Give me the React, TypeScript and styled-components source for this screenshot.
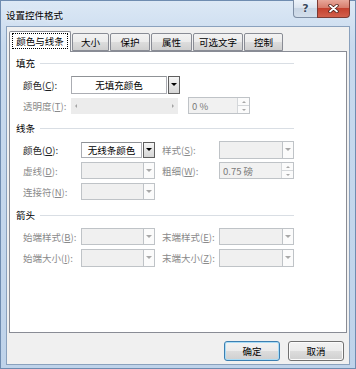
import React from "react";
import styled, { createGlobalStyle } from "styled-components";

const GlobalStyle = createGlobalStyle`
  html, body { margin: 0; padding: 0; background: #c6d8ec; }
  body {
    font-family: "Noto Sans CJK SC", "Noto Sans", sans-serif;
    font-size: 9.5px;
    color: #1e1e1e;
  }
  * { box-sizing: border-box; }
`;

// window frame
const Window = styled.div`
  width: 356px;
  height: 369px;
  border: 1px solid #6f8cb0;
  background: linear-gradient(180deg, #dce8f5 0%, #c8daee 12%, #bfd3ea 100%);
  display: flex;
  flex-direction: column;
  padding: 0 5px 3px 5px;
`;
const TitleBar = styled.div`
  height: 25px;
  display: flex;
  align-items: flex-start;
`;
const Title = styled.div`
  margin-top: 8px;
  line-height: 12px;
  color: #000;
  text-shadow: 0 0 4px rgba(255, 255, 255, 0.9);
`;
const Spacer = styled.div`
  flex: 1;
`;
const CaptionButton = styled.div<{ $w: number; $close?: boolean }>`
  width: ${(p) => p.$w}px;
  height: 18px;
  margin-top: -1px;
  display: flex;
  align-items: center;
  justify-content: center;
  border: 1px solid ${(p) => (p.$close ? "#7c3a33" : "#7d8da3")};
  border-top: none;
  border-radius: ${(p) => (p.$close ? "0 0 4px 0" : "0 0 0 4px")};
  margin-left: ${(p) => (p.$close ? "-1px" : "0")};
  background: ${(p) =>
    p.$close
      ? "linear-gradient(180deg, #e8a79a 0%, #d77d6d 45%, #c4412f 50%, #d2604c 100%)"
      : "linear-gradient(180deg, #eef3f9 0%, #dbe4ef 45%, #c8d5e4 50%, #d3deeb 100%)"};
  color: #3a4a5e;
  font-family: "DejaVu Sans", sans-serif;
  font-size: 11px;
  font-weight: bold;
  text-shadow: 0 0 2px #fff;
`;

// client area
const Client = styled.div`
  flex: 1;
  border: 1px solid #8aa1bd;
  background: #f0f0f0;
  display: flex;
  flex-direction: column;
  padding: 4px 2px 0 2px;
`;
const TabStrip = styled.div`
  height: 20px;
  display: flex;
  align-items: flex-end;
  position: relative;
  z-index: 1;
`;
const Tab = styled.div<{ $w: number; $active?: boolean }>`
  width: ${(p) => p.$w}px;
  height: ${(p) => (p.$active ? 21 : 18)}px;
  margin-bottom: ${(p) => (p.$active ? -1 : 0)}px;
  margin-right: 1px;
  border: 1px solid #898c95;
  border-bottom: ${(p) => (p.$active ? "none" : "1px solid #898c95")};
  border-radius: 2px 2px 0 0;
  background: ${(p) =>
    p.$active
      ? "#ffffff"
      : "linear-gradient(180deg, #f3f3f3 0%, #ebebeb 50%, #dddddd 50%, #cfcfcf 100%)"};
  display: flex;
  align-items: center;
  justify-content: center;
  padding-bottom: ${(p) => (p.$active ? 2 : 0)}px;
  color: #000;
`;
const FocusText = styled.span`
  outline: 1px dotted #000;
  outline-offset: 1px;
  padding: 0 2px;
  line-height: 12px;
`;
const Panel = styled.div`
  height: 282px;
  border: 1px solid #898c95;
  background: #fff;
  padding: 3px 0 0 6px;
  display: flex;
  flex-direction: column;
`;

// sections
const Header = styled.div<{ $top: number }>`
  width: 278px;
  height: 16px;
  margin-top: ${(p) => p.$top}px;
  margin-bottom: 3px;
  display: flex;
  align-items: center;
  color: #000;
`;
const HeaderLine = styled.div`
  flex: 1;
  height: 1px;
  margin-left: 5px;
  background: #d9dee4;
`;
const Row = styled.div`
  height: 21px;
  padding-left: 7px;
  display: flex;
  align-items: center;
`;
const Label = styled.div<{ $w: number; $off?: boolean; $gap?: number }>`
  width: ${(p) => p.$w}px;
  margin-left: ${(p) => p.$gap || 0}px;
  color: ${(p) => (p.$off ? "#8a8a8a" : "#1e1e1e")};
  white-space: nowrap;
  u { text-decoration-thickness: 1px; text-underline-offset: 1px; }
`;

// controls
const ComboBox = styled.div<{ $w: number; $h: number }>`
  width: ${(p) => p.$w}px;
  height: ${(p) => p.$h}px;
  display: flex;
`;
const ComboField = styled.div<{ $off?: boolean }>`
  flex: 1;
  border: 1px solid ${(p) => (p.$off ? "#bfc3c7" : "#abadb3")};
  border-top-color: ${(p) => (p.$off ? "#bfc3c7" : "#8f9296")};
  background: ${(p) => (p.$off ? "#f0f0f0" : "#fff")};
  display: flex;
  align-items: center;
  justify-content: center;
  color: #000;
`;
const ComboButton = styled.div<{ $off?: boolean }>`
  width: 12px;
  margin-left: ${(p) => (p.$off ? -1 : 1)}px;
  border: 1px solid ${(p) => (p.$off ? "#bfc3c7" : "#5f5f5f")};
  background: ${(p) =>
    p.$off ? "#fbfbfb" : "linear-gradient(180deg, #f6f6f6 0%, #e4e4e4 50%, #d6d6d6 100%)"};
  display: flex;
  align-items: center;
  justify-content: center;
`;
const Arrow = styled.div<{ $dir: "up" | "down" | "left" | "right"; $color: string; $s?: number }>`
  width: 0;
  height: 0;
  ${(p) => {
    const s = p.$s || 3;
    const t = "transparent";
    if (p.$dir === "down")
      return `border-left:${s}px solid ${t};border-right:${s}px solid ${t};border-top:${s}px solid ${p.$color};`;
    if (p.$dir === "up")
      return `border-left:${s}px solid ${t};border-right:${s}px solid ${t};border-bottom:${s}px solid ${p.$color};`;
    if (p.$dir === "left")
      return `border-top:${s}px solid ${t};border-bottom:${s}px solid ${t};border-right:${s}px solid ${p.$color};`;
    return `border-top:${s}px solid ${t};border-bottom:${s}px solid ${t};border-left:${s}px solid ${p.$color};`;
  }}
`;
const Slider = styled.div`
  width: 107px;
  height: 16px;
  background: #ececec;
  display: flex;
  align-items: center;
  justify-content: space-between;
  padding: 0 4px;
`;
const SpinBox = styled.div<{ $w: number; $gap?: number }>`
  width: ${(p) => p.$w}px;
  height: 17px;
  margin-left: ${(p) => p.$gap || 0}px;
  border: 1px solid #bfc3c7;
  background: #f1f1f1;
  display: flex;
`;
const SpinText = styled.div`
  flex: 1;
  padding-left: 3px;
  display: flex;
  align-items: center;
  color: #7a7a7a;
`;
const SpinButtons = styled.div`
  width: 12px;
  display: flex;
  flex-direction: column;
  border-left: 1px solid #d4d7da;
  background: #fbfbfb;
`;
const SpinHalf = styled.div<{ $first?: boolean }>`
  flex: 1;
  display: flex;
  align-items: center;
  justify-content: center;
  border-bottom: ${(p) => (p.$first ? "1px solid #d4d7da" : "none")};
`;

// footer
const Footer = styled.div`
  display: flex;
  justify-content: flex-end;
  gap: 8px;
  padding: 8px 3px 0 0;
`;
const Button = styled.div<{ $default?: boolean }>`
  width: 56px;
  height: 20px;
  border: 1px solid ${(p) => (p.$default ? "#3c7fb1" : "#707070")};
  border-radius: 3px;
  box-shadow: ${(p) => (p.$default ? "inset 0 0 0 1px #a9dcf6" : "inset 0 0 0 1px #fbfbfb")};
  background: linear-gradient(180deg, #f2f2f2 0%, #ebebeb 50%, #dddddd 50%, #cfcfcf 100%);
  display: flex;
  align-items: center;
  justify-content: center;
  color: #000;
`;

type ComboProps = { w: number; h: number; text?: string; off?: boolean };
const Combo = ({ w, h, text, off }: ComboProps) => (
  <ComboBox $w={w} $h={h}>
    <ComboField $off={off}>{text}</ComboField>
    <ComboButton $off={off}>
      <Arrow $dir="down" $color={off ? "#a8a8a8" : "#000"} $s={off ? 3 : 3} />
    </ComboButton>
  </ComboBox>
);

const Spin = ({ w, text, gap }: { w: number; text: string; gap?: number }) => (
  <SpinBox $w={w} $gap={gap}>
    <SpinText>{text}</SpinText>
    <SpinButtons>
      <SpinHalf $first>
        <Arrow $dir="up" $color="#a8a8a8" $s={2} />
      </SpinHalf>
      <SpinHalf>
        <Arrow $dir="down" $color="#a8a8a8" $s={2} />
      </SpinHalf>
    </SpinButtons>
  </SpinBox>
);

const tabs = [
  { name: "大小", w: 37 },
  { name: "保护", w: 40 },
  { name: "属性", w: 41 },
  { name: "可选文字", w: 50 },
  { name: "控制", w: 39 },
];

const App = () => (
  <>
    <GlobalStyle />
    <Window>
      <TitleBar>
        <Title>设置控件格式</Title>
        <Spacer />
        <CaptionButton $w={25}>?</CaptionButton>
        <CaptionButton $w={33} $close>
          <svg width="11" height="9" viewBox="0 0 11 9">
            <path d="M2 1.5 L9 7.5 M9 1.5 L2 7.5" stroke="#4a1d17" strokeWidth="3.4" strokeLinecap="round" />
            <path d="M2 1.5 L9 7.5 M9 1.5 L2 7.5" stroke="#fff" strokeWidth="1.8" strokeLinecap="round" />
          </svg>
        </CaptionButton>
      </TitleBar>
      <Client>
        <TabStrip>
          <Tab $w={62} $active>
            <FocusText>颜色与线条</FocusText>
          </Tab>
          {tabs.map((t) => (
            <Tab key={t.name} $w={t.w}>
              {t.name}
            </Tab>
          ))}
        </TabStrip>
        <Panel>
          <Header $top={0}>
            填充<HeaderLine />
          </Header>
          <Row>
            <Label $w={48}>
              颜色(<u>C</u>):
            </Label>
            <Combo w={109} h={18} text="无填充颜色" />
          </Row>
          <Row>
            <Label $w={48} $off>
              透明度(<u>T</u>):
            </Label>
            <Slider>
              <Arrow $dir="left" $color="#a3a3a3" $s={2} />
              <Arrow $dir="right" $color="#a3a3a3" $s={2} />
            </Slider>
            <Spin w={62} text="0 %" gap={10} />
          </Row>

          <Header $top={4}>
            线条<HeaderLine />
          </Header>
          <Row>
            <Label $w={58}>
              颜色(<u>O</u>):
            </Label>
            <Combo w={74} h={16} text="无线条颜色" />
            <Label $w={57} $gap={7} $off>
              样式(<u>S</u>):
            </Label>
            <Combo w={75} h={18} off />
          </Row>
          <Row>
            <Label $w={58} $off>
              虚线(<u>D</u>):
            </Label>
            <Combo w={74} h={17} off />
            <Label $w={57} $gap={7} $off>
              粗细(<u>W</u>):
            </Label>
            <Spin w={75} text="0.75 磅" />
          </Row>
          <Row>
            <Label $w={58} $off>
              连接符(<u>N</u>):
            </Label>
            <Combo w={74} h={17} off />
          </Row>

          <Header $top={5}>
            箭头<HeaderLine />
          </Header>
          <Row>
            <Label $w={58} $off>
              始端样式(<u>B</u>):
            </Label>
            <Combo w={74} h={17} off />
            <Label $w={57} $gap={7} $off>
              末端样式(<u>E</u>):
            </Label>
            <Combo w={75} h={17} off />
          </Row>
          <Row>
            <Label $w={58} $off>
              始端大小(<u>I</u>):
            </Label>
            <Combo w={74} h={18} off />
            <Label $w={57} $gap={7} $off>
              末端大小(<u>Z</u>):
            </Label>
            <Combo w={75} h={18} off />
          </Row>
        </Panel>
        <Footer>
          <Button $default>确定</Button>
          <Button>取消</Button>
        </Footer>
      </Client>
    </Window>
  </>
);

export default App;
